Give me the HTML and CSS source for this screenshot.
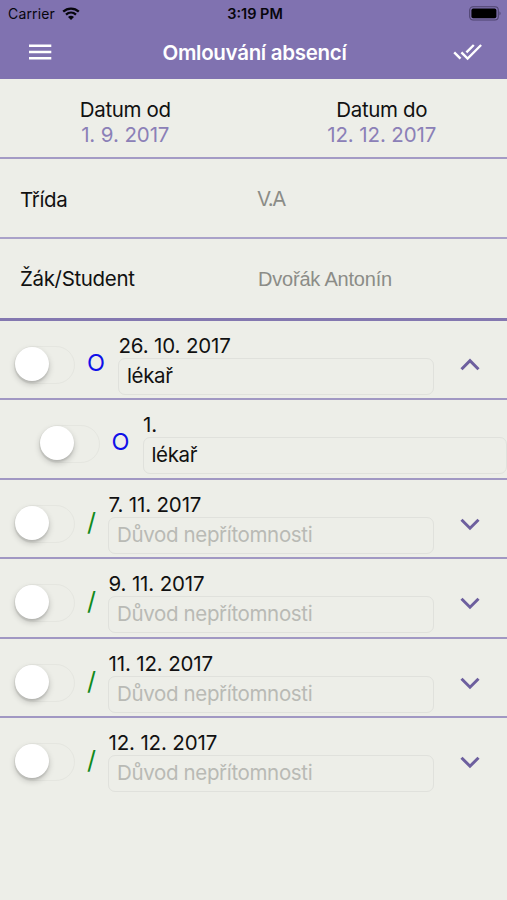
FILE: index.html
```
<!DOCTYPE html>
<html lang="cs">
<head>
<meta charset="utf-8">
<title>Omlouvání absencí</title>
<link rel="stylesheet" href="styles.css">
</head>
<body>
<header class="top">
  <div class="status">
    <div class="carrier"><span>Carrier</span>
      <svg width="18" height="13" viewBox="0 0 18 13" fill="none" stroke="#07060c" stroke-width="2.3"><path d="M1.2 4.6C5.6.5 12.4.5 16.8 4.6M4 7.7C6.9 5 11.1 5 14 7.7"/><path d="M9 13L6 9.9C7.7 8.3 10.3 8.3 12 9.9Z" fill="#07060c" stroke="none"/></svg>
    </div>
    <span class="clock">3:19 PM</span>
    <svg class="battery" width="33" height="15" viewBox="0 0 33 15"><rect x=".7" y=".8" width="28.6" height="13.2" rx="3.4" fill="none" stroke="#4d436e" stroke-width="1.1"/><rect x="2.4" y="2.6" width="25" height="9.6" rx="1.8"/><path d="M30.5 5.2Q32.6 7.4 30.5 9.6Z" fill="#4d436e"/></svg>
  </div>
  <div class="nav">
    <svg width="24" height="18" viewBox="0 0 24 18" stroke="#fff" stroke-width="2.5"><path d="M1 2.7H23.3M1 9H23.3M1 15.2H23.3"/></svg>
    <h1>Omlouvání absencí</h1>
    <svg width="30" height="18" viewBox="0 0 30 18" fill="none" stroke="#fff" stroke-width="2.4"><path d="M1.2 9.3L7.5 15.6M8.4 9.3L14.6 15.5L28.1 2M20.8 2L13.4 9.4"/></svg>
  </div>
</header>
<main>
  <section class="dates">
    <div><b>Datum od</b><span>1. 9. 2017</span></div>
    <div><b>Datum do</b><span>12. 12. 2017</span></div>
  </section>
  <section class="pick"><label>Třída</label><span class="class-name">V.A</span></section>
  <section class="pick student"><label>Žák/Student</label><span class="name">Dvořák Antonín</span></section>

  <section class="row excused">
    <i class="switch"></i><span class="mark">O</span>
    <div class="entry"><time>26. 10. 2017</time><div class="field">lékař</div></div>
    <svg class="chev" width="20" height="14" viewBox="0 0 20 14"><path d="M1.5 11.2L10 2.7L18.5 11.2"/></svg>
  </section>
  <section class="row excused lesson">
    <i class="switch"></i><span class="mark">O</span>
    <div class="entry"><time>1.</time><div class="field">lékař</div></div>
  </section>
  <section class="row">
    <i class="switch"></i><span class="mark">/</span>
    <div class="entry"><time>7. 11. 2017</time><div class="field empty">Důvod nepřítomnosti</div></div>
    <svg class="chev" width="20" height="14" viewBox="0 0 20 14"><path d="M1.5 2.7L10 11.2L18.5 2.7"/></svg>
  </section>
  <section class="row">
    <i class="switch"></i><span class="mark">/</span>
    <div class="entry"><time>9. 11. 2017</time><div class="field empty">Důvod nepřítomnosti</div></div>
    <svg class="chev" width="20" height="14" viewBox="0 0 20 14"><path d="M1.5 2.7L10 11.2L18.5 2.7"/></svg>
  </section>
  <section class="row">
    <i class="switch"></i><span class="mark">/</span>
    <div class="entry"><time>11. 12. 2017</time><div class="field empty">Důvod nepřítomnosti</div></div>
    <svg class="chev" width="20" height="14" viewBox="0 0 20 14"><path d="M1.5 2.7L10 11.2L18.5 2.7"/></svg>
  </section>
  <section class="row last">
    <i class="switch"></i><span class="mark">/</span>
    <div class="entry"><time>12. 12. 2017</time><div class="field empty">Důvod nepřítomnosti</div></div>
    <svg class="chev" width="20" height="14" viewBox="0 0 20 14"><path d="M1.5 2.7L10 11.2L18.5 2.7"/></svg>
  </section>
</main>
</body>
</html>
```
FILE: styles.css
```
* { box-sizing: border-box; }
body {
  margin: 0;
  height: 900px;
  overflow: hidden;
  background: #edeee8;
  color: #111;
  font-family: Inter, "Liberation Sans", sans-serif;
  font-size: 20.5px;
  line-height: 25px;
  letter-spacing: -.35px;
}
svg { display: block; flex: none; }
.top { height: 79px; background: #8072b0; }
.status {
  height: 27px;
  display: grid;
  grid-template-columns: 1fr auto 1fr;
  align-items: center;
  padding: 0 5px 0 8px;
  font-size: 14px;
  color: #07060c;
}
.carrier { display: flex; align-items: center; gap: 7px; letter-spacing: .15px; }
.clock { font-weight: 600; font-size: 14.5px; letter-spacing: 0; }
.battery { justify-self: end; }
.nav {
  height: 50px;
  display: grid;
  grid-template-columns: 30px 1fr 30px;
  align-items: center;
  padding: 0 26px 0 28px;
}
.nav svg:last-child { margin-left: 2px; }
h1 {
  margin: 0;
  text-align: center;
  font-size: 20.5px;
  font-weight: 600;
  letter-spacing: -.3px;
  color: #fff;
}
.dates {
  height: 79.5px;
  display: grid;
  grid-template-columns: 1fr 1fr;
  padding-top: 18px;
  border-bottom: 2px solid #a49bc5;
  text-align: center;
}
.dates div { padding-right: 3px; }
.dates div + div { padding: 0 0 0 3px; }
.dates b { display: block; font-weight: 400; }
.dates span { color: #8b80b7; letter-spacing: -.1px; }
.pick {
  height: 80.5px;
  display: grid;
  grid-template-columns: 237px 1fr;
  align-items: center;
  padding: 4px 0 0 20px;
  border-bottom: 2px solid #aaa2c9;
}
.pick span { color: #8b8c87; }
.class-name { letter-spacing: -1.4px; padding-bottom: 2px; }
.student { border-bottom: 3px solid #8478b0; height: 82px; padding-top: 0; }
.pick .name { font-family: "Liberation Sans", sans-serif; font-size: 20px; letter-spacing: -.2px; padding: 1px 0 0 1px; }
.row {
  height: 79.4px;
  display: flex;
  align-items: flex-start;
  padding-left: 14px;
  border-bottom: 2px solid #a198c3;
}
.last { border-bottom: 0; }
.switch {
  flex: none;
  width: 61px;
  height: 38px;
  margin-top: 25px;
  border: 1.5px solid #e5e6e0;
  border-radius: 19px;
}
.switch::before {
  content: "";
  display: block;
  width: 34px;
  height: 34px;
  border-radius: 50%;
  background: #fff;
  box-shadow: 0 3px 6px rgba(0,0,0,.2), 0 2px 2px rgba(0,0,0,.1);
}
.mark {
  width: 33px;
  flex: none;
  padding: 27px 0 0 12px;
  font-size: 25px;
  line-height: 30px;
  color: #118a1c;
}
.excused .mark { width: 43px; color: #1010e8; font-size: 23.5px; }
.lesson { padding-left: 38.5px; }
.entry { flex: 1; padding-top: 13px; }
.entry time { display: block; line-height: 24px; padding-left: .5px; letter-spacing: -.15px; }
.field {
  height: 37px;
  border: 1.5px solid #e0e1dc;
  border-radius: 7px;
  padding: 4px 8px;
  line-height: 25px;
}
.empty { color: #b9bab5; letter-spacing: -.35px; }
.chev {
  margin: 37px 27px 0 26px;
  fill: none;
  stroke: #6d5f9e;
  stroke-width: 3;
}
```
